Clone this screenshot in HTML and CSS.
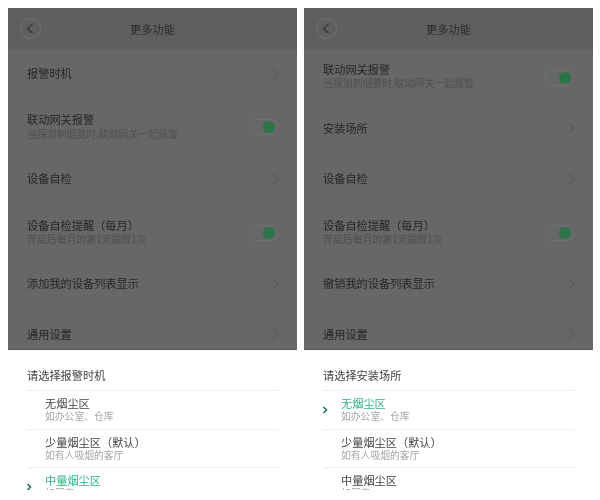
FILE: index.html
```html
<!DOCTYPE html>
<html lang="zh-CN">
<head>
  <meta charset="UTF-8">
  <title>更多功能</title>
  <link rel="stylesheet" href="styles.css">
</head>
<body>
  <div class="phone">
    <div class="screen">
      <div class="topbar">
        <span class="back"><svg width="8" height="11" viewBox="0 0 8 11"><path d="M6.5 1 L1.5 5.5 L6.5 10"/></svg></span>
        <span class="topbar-title">更多功能</span>
      </div>
      <div class="row h48"><span class="name">报警时机</span><span class="arrow"></span></div>
      <div class="row h56">
        <div class="texts"><div class="name">联动网关报警</div><div class="desc">当探测到烟雾时,联动网关一起报警</div></div>
        <span class="switch"></span>
      </div>
      <div class="row h50"><span class="name">设备自检</span><span class="arrow"></span></div>
      <div class="row h55">
        <div class="texts"><div class="name">设备自检提醒（每月）</div><div class="desc">开启后每月的第1天提醒1次</div></div>
        <span class="switch"></span>
      </div>
      <div class="row h50"><span class="name">添加我的设备列表显示</span><span class="arrow"></span></div>
      <div class="row last"><span class="name">通用设置</span><span class="arrow"></span></div>
    </div>
    <div class="sheet">
      <div class="sheet-title">请选择报警时机</div>
      <div class="option">
        <div class="option-name">无烟尘区</div>
        <div class="option-desc">如办公室、仓库</div>
      </div>
      <div class="option">
        <div class="option-name">少量烟尘区（默认）</div>
        <div class="option-desc">如有人吸烟的客厅</div>
      </div>
      <div class="option selected">
        <svg class="tick" width="6" height="8" viewBox="0 0 6 8"><path d="M1.5 1 L4.5 4 L1.5 7"/></svg>
        <div class="option-name">中量烟尘区</div>
        <div class="option-desc">如厨房</div>
      </div>
    </div>
  </div>

  <div class="phone">
    <div class="screen">
      <div class="topbar">
        <span class="back"><svg width="8" height="11" viewBox="0 0 8 11"><path d="M6.5 1 L1.5 5.5 L6.5 10"/></svg></span>
        <span class="topbar-title">更多功能</span>
      </div>
      <div class="row h53">
        <div class="texts up"><div class="name">联动网关报警</div><div class="desc">当探测到烟雾时,联动网关一起报警</div></div>
        <span class="switch"></span>
      </div>
      <div class="row h51"><span class="name">安装场所</span><span class="arrow"></span></div>
      <div class="row h50"><span class="name">设备自检</span><span class="arrow"></span></div>
      <div class="row h55">
        <div class="texts"><div class="name">设备自检提醒（每月）</div><div class="desc">开启后每月的第1天提醒1次</div></div>
        <span class="switch"></span>
      </div>
      <div class="row h50"><span class="name">撤销我的设备列表显示</span><span class="arrow"></span></div>
      <div class="row last"><span class="name">通用设置</span><span class="arrow"></span></div>
    </div>
    <div class="sheet">
      <div class="sheet-title">请选择安装场所</div>
      <div class="option selected">
        <svg class="tick" width="6" height="8" viewBox="0 0 6 8"><path d="M1.5 1 L4.5 4 L1.5 7"/></svg>
        <div class="option-name">无烟尘区</div>
        <div class="option-desc">如办公室、仓库</div>
      </div>
      <div class="option">
        <div class="option-name">少量烟尘区（默认）</div>
        <div class="option-desc">如有人吸烟的客厅</div>
      </div>
      <div class="option">
        <div class="option-name">中量烟尘区</div>
        <div class="option-desc">如厨房</div>
      </div>
    </div>
  </div>
</body>
</html>
```

FILE: styles.css
```css
body {
  margin: 0;
  padding: 8px 7px 0 8px;
  height: 500px;
  box-sizing: border-box;
  display: flex;
  gap: 7px;
  background-color: #fff;
  font-family: "Noto Sans CJK SC", "Liberation Sans", sans-serif;
  overflow: hidden;
}

/* the source picture is a soft jpeg */
.phone {
  width: 289px;
  height: 482px;
  overflow: hidden;
  display: flex;
  flex-direction: column;
  filter: blur(0.35px);
}

.screen {
  height: 342px;
  flex: none;
  overflow: hidden;
  background-color: #676767;
  border-bottom: 1px solid #555;
  box-sizing: border-box;
}

.topbar {
  height: 42px;
  display: flex;
  align-items: center;
  justify-content: center;
  position: relative;
  background-color: #5f5f5f;
}

.topbar-title {
  font-size: 11.2px;
  color: #2c2c2c;
}

.back {
  position: absolute;
  left: 12px;
  top: 10px;
  width: 21px;
  height: 21px;
  box-sizing: border-box;
  border: 1px solid #707070;
  border-radius: 50%;
  display: flex;
  align-items: center;
  justify-content: center;
}

.back svg {
  margin-right: 2px;
}

.back path {
  fill: none;
  stroke: #333;
  stroke-width: 1.2;
}

.row {
  margin: 0 19px;
  display: flex;
  align-items: center;
  justify-content: space-between;
  box-sizing: border-box;
  border-bottom: 1px solid #626262;
}

.h48 { height: 48px; }
.h50 { height: 50px; }
.h51 { height: 51px; }
.h53 { height: 53px; }
.h55 { height: 55px; }
.h56 { height: 56px; }

.row.last {
  height: 50px;
  border-bottom: none;
}

.texts {
  padding-top: 2px;
}

.texts.up {
  padding-top: 0;
}

.name {
  font-size: 11.2px;
  line-height: 13px;
  color: #262626;
}

.desc {
  margin-top: 1.5px;
  font-size: 9.9px;
  line-height: 12px;
  color: #505050;
}

.arrow {
  width: 7px;
  height: 7px;
  margin-right: 1px;
  border-top: 1px solid #5a5a5a;
  border-right: 1px solid #5a5a5a;
  transform: rotate(45deg);
}

.switch {
  width: 30px;
  height: 16px;
  margin-top: 3px;
  box-sizing: border-box;
  border: 1px solid #6f6f6f;
  border-radius: 8px;
  display: flex;
  align-items: center;
  justify-content: flex-end;
  padding-right: 2px;
}

.switch::after {
  content: "";
  flex: none;
  width: 12px;
  height: 12px;
  border-radius: 50%;
  background-color: #2c7548;
}

.sheet {
  flex: 1;
  min-height: 0;
  overflow: hidden;
  background-color: #fff;
  padding: 0 19px;
}

.sheet-title {
  height: 41px;
  padding-top: 18px;
  line-height: 14px;
  font-size: 11.2px;
  color: #3f3f3f;
  box-sizing: border-box;
  border-bottom: 1px solid #eee;
}

.option {
  position: relative;
  height: 38.5px;
  padding: 6px 0 0 18px;
  box-sizing: border-box;
  border-bottom: 1px solid #eee;
}

.option-name {
  font-size: 11.2px;
  line-height: 13px;
  color: #444;
}

.option-desc {
  font-size: 9.8px;
  line-height: 12px;
  color: #a8a8a8;
}

.selected .option-name {
  color: #2db47f;
}

.tick {
  position: absolute;
  left: -1px;
  top: 15px;
}

.tick path {
  fill: none;
  stroke: #1d7a55;
  stroke-width: 1.6;
}
```
